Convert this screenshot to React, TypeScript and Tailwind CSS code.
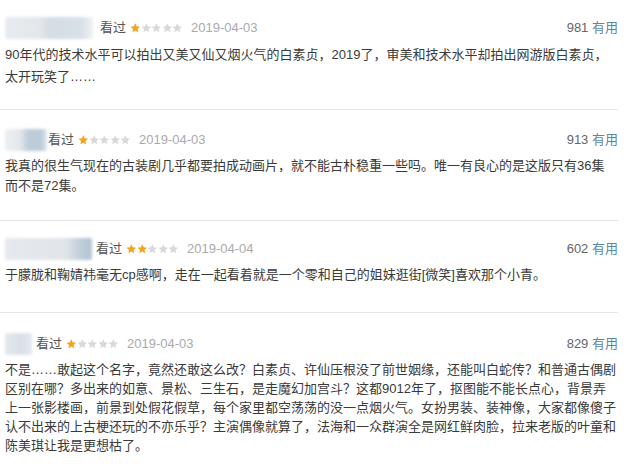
import React from "react";

type Review = {
  nameW: number;
  nameGap: number;
  nameBg: string;
  stars: number;
  date: string;
  useful: string;
  lines: string[];
  pt: string;
  pb: string;
  leading: string;
};

const Star = ({ on }: { on: boolean }) => (
  <svg width="10.6" height="12" viewBox="0 0 24 24" className="block">
    <path
      d="M12 1.2l3.2 7 7.6.8-5.7 5.1 1.6 7.5L12 17.8l-6.7 3.8 1.6-7.5L1.2 9l7.6-.8z"
      fill={on ? "#f2a41e" : "#d9d9d9"}
    />
  </svg>
);

const reviews: Review[] = [
  {
    nameW: 88,
    nameGap: 7,
    nameBg: "bg-[linear-gradient(90deg,#e8ebf0_0%,#e3e7ec_40%,#d4dce4_50%,#d8dfe7_85%,#f0f2f5_100%)]",
    stars: 1,
    date: "2019-04-03",
    useful: "981",
    lines: [
      "90年代的技术水平可以拍出又美又仙又烟火气的白素贞，2019了，审美和技术水平却拍出网游版白素贞，",
      "太开玩笑了……",
    ],
    pt: "pt-[18px]",
    pb: "pb-[21px]",
    leading: "leading-[22px]",
  },
  {
    nameW: 42,
    nameGap: 1,
    nameBg: "bg-[linear-gradient(90deg,#eceff2_0%,#e3e7ec_35%,#bfcdd9_55%,#bccbd7_85%,#e0e6ec_100%)]",
    stars: 1,
    date: "2019-04-03",
    useful: "913",
    lines: [
      "我真的很生气现在的古装剧几乎都要拍成动画片，就不能古朴稳重一些吗。唯一有良心的是这版只有36集",
      "而不是72集。",
    ],
    pt: "pt-[20px]",
    pb: "pb-[24px]",
    leading: "leading-[20px]",
  },
  {
    nameW: 87,
    nameGap: 4,
    nameBg: "bg-[linear-gradient(90deg,#e6e9ee_0%,#e0e5eb_70%,#c2cfdb_85%,#b2c3d1_100%)]",
    stars: 2,
    date: "2019-04-04",
    useful: "602",
    lines: ["于朦胧和鞠婧祎毫无cp感啊，走在一起看着就是一个零和自己的姐妹逛街[微笑]喜欢那个小青。"],
    pt: "pt-[18px]",
    pb: "pb-[27px]",
    leading: "leading-[20px]",
  },
  {
    nameW: 27,
    nameGap: 4,
    nameBg: "bg-[linear-gradient(90deg,#e4e8ed_0%,#dae0e7_60%,#e4e8ed_100%)]",
    stars: 1,
    date: "2019-04-03",
    useful: "829",
    lines: [
      "不是……敢起这个名字，竟然还敢这么改？白素贞、许仙压根没了前世姻缘，还能叫白蛇传？和普通古偶剧",
      "区别在哪？多出来的如意、景松、三生石，是走魔幻加宫斗？这都9012年了，抠图能不能长点心，背景弄",
      "上一张影楼画，前景到处假花假草，每个家里都空荡荡的没一点烟火气。女扮男装、装神像，大家都像傻子",
      "认不出来的上古梗还玩的不亦乐乎？主演偶像就算了，法海和一众群演全是网红鲜肉脸，拉来老版的叶童和",
      "陈美琪让我是更想枯了。",
    ],
    pt: "pt-[21px]",
    pb: "pb-[12px]",
    leading: "leading-[19px]",
  },
];

export default function App() {
  return (
    <div
      className="w-[633px] h-[467px] overflow-hidden bg-white"
      style={{ fontFamily: '"Liberation Sans", "Noto Sans CJK SC", sans-serif' }}
    >
      <div className="w-[618px] flex flex-col">
        {reviews.map((r, i) => (
          <div
            key={i}
            className={`${r.pt} ${r.pb} ${i < 3 ? "border-b border-[#e6e6e6]" : ""}`}
          >
            <div className="h-[20px] flex items-center pl-[5px] text-[13px]">
              <div
                className={`h-[22px] ${r.nameBg} blur-[1.5px] rounded-[2px]`}
                style={{ width: r.nameW, marginRight: r.nameGap }}
              />
              <span className="text-[#555]">看过</span>
              <span className="flex ml-[4px] mr-[8px]">
                {[0, 1, 2, 3, 4].map((k) => (
                  <Star key={k} on={k < r.stars} />
                ))}
              </span>
              <span className="text-[#aaa]">{r.date}</span>
              <span className="ml-auto text-[#666]">
                {r.useful} <span className="text-[#5b86a8]">有用</span>
              </span>
            </div>
            <div className={`mt-[6px] pl-[5px] text-[13px] ${r.leading} text-[#3a3a3a] whitespace-nowrap`}>
              {r.lines.map((l, j) => (
                <div key={j}>{l}</div>
              ))}
            </div>
          </div>
        ))}
      </div>
    </div>
  );
}
